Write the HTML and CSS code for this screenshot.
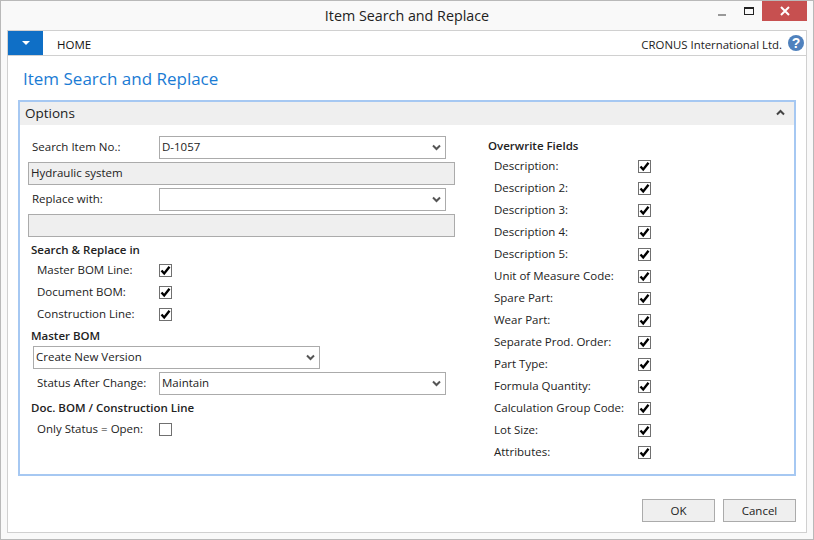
FILE: index.html
```html
<!DOCTYPE html>
<html lang="en">
<head>
  <meta charset="UTF-8">
  <title>Item Search and Replace</title>
  <link rel="stylesheet" href="styles.css">
</head>
<body>
  <svg class="sprites" width="0" height="0">
    <symbol id="check" viewBox="0 0 11 11"><path d="M1.5 5.5 L4.2 8.5 L9.5 1.8" fill="none" stroke="#000" stroke-width="2.4"/></symbol>
    <symbol id="chevron" viewBox="0 0 9 7"><path d="M1 1.5 L4.5 5 L8 1.5" fill="none" stroke="#555" stroke-width="2"/></symbol>
  </svg>

  <div class="window">
    <div class="titlebar">
      <div class="title">Item Search and Replace</div>
      <div class="controls">
        <span class="min"></span>
        <span class="max"></span>
        <span class="close">
          <svg width="10" height="10" viewBox="0 0 10 10"><path d="M1 1 L9 9 M9 1 L1 9" stroke="#fff" stroke-width="2"/></svg>
        </span>
      </div>
    </div>

    <div class="frame">
      <div class="ribbon">
        <div class="app-btn"><span class="arrow"></span></div>
        <div class="tab">HOME</div>
        <div class="company">CRONUS International Ltd.</div>
        <div class="help">?</div>
      </div>

      <h1>Item Search and Replace</h1>

      <div class="panel">
        <div class="panel-head">
          <span>Options</span>
          <svg width="9" height="7" viewBox="0 0 9 7"><path d="M1 5.5 L4.5 2 L8 5.5" fill="none" stroke="#444" stroke-width="2"/></svg>
        </div>
        <div class="panel-body">
          <div class="col-left">
            <div class="field">
              <label>Search Item No.:</label>
              <div class="combo"><span>D-1057</span><svg class="chev"><use href="#chevron"/></svg></div>
            </div>
            <div class="readonly">Hydraulic system</div>
            <div class="field">
              <label>Replace with:</label>
              <div class="combo"><span></span><svg class="chev"><use href="#chevron"/></svg></div>
            </div>
            <div class="readonly"></div>

            <h3 class="first">Search &amp; Replace in</h3>
            <div class="check-row"><label>Master BOM Line:</label><span class="box"><svg><use href="#check"/></svg></span></div>
            <div class="check-row"><label>Document BOM:</label><span class="box"><svg><use href="#check"/></svg></span></div>
            <div class="check-row"><label>Construction Line:</label><span class="box"><svg><use href="#check"/></svg></span></div>

            <h3>Master BOM</h3>
            <div class="combo wide"><span>Create New Version</span><svg class="chev"><use href="#chevron"/></svg></div>
            <div class="field indent">
              <label>Status After Change:</label>
              <div class="combo"><span>Maintain</span><svg class="chev"><use href="#chevron"/></svg></div>
            </div>

            <h3 class="doc">Doc. BOM / Construction Line</h3>
            <div class="check-row"><label>Only Status = Open:</label><span class="box"></span></div>
          </div>

          <div class="col-right">
            <h3>Overwrite Fields</h3>
            <div class="check-row"><label>Description:</label><span class="box"><svg><use href="#check"/></svg></span></div>
            <div class="check-row"><label>Description 2:</label><span class="box"><svg><use href="#check"/></svg></span></div>
            <div class="check-row"><label>Description 3:</label><span class="box"><svg><use href="#check"/></svg></span></div>
            <div class="check-row"><label>Description 4:</label><span class="box"><svg><use href="#check"/></svg></span></div>
            <div class="check-row"><label>Description 5:</label><span class="box"><svg><use href="#check"/></svg></span></div>
            <div class="check-row"><label>Unit of Measure Code:</label><span class="box"><svg><use href="#check"/></svg></span></div>
            <div class="check-row"><label>Spare Part:</label><span class="box"><svg><use href="#check"/></svg></span></div>
            <div class="check-row"><label>Wear Part:</label><span class="box"><svg><use href="#check"/></svg></span></div>
            <div class="check-row"><label>Separate Prod. Order:</label><span class="box"><svg><use href="#check"/></svg></span></div>
            <div class="check-row"><label>Part Type:</label><span class="box"><svg><use href="#check"/></svg></span></div>
            <div class="check-row"><label>Formula Quantity:</label><span class="box"><svg><use href="#check"/></svg></span></div>
            <div class="check-row"><label>Calculation Group Code:</label><span class="box"><svg><use href="#check"/></svg></span></div>
            <div class="check-row"><label>Lot Size:</label><span class="box"><svg><use href="#check"/></svg></span></div>
            <div class="check-row"><label>Attributes:</label><span class="box"><svg><use href="#check"/></svg></span></div>
          </div>
        </div>
      </div>

      <div class="actions">
        <button>OK</button>
        <button>Cancel</button>
      </div>
    </div>
  </div>
</body>
</html>
```

FILE: styles.css
```css
* {
  box-sizing: border-box;
}
html, body {
  margin: 0;
  height: 100%;
}
body {
  font-family: "Open Sans", "Noto Sans", sans-serif;
  font-size: 11.5px;
  color: #222;
  overflow: hidden;
}
.sprites {
  position: absolute;
}
.window {
  width: 814px;
  height: 540px;
  background-color: #f9f9f9;
  border: 1px solid #b9b9b9;
  padding: 0 6px 6px 6px;
  display: flex;
  flex-direction: column;
}
.titlebar {
  height: 29px;
  display: flex;
  justify-content: center;
  align-items: center;
  position: relative;
  flex: none;
}
.title {
  font-size: 14.3px;
}
.controls {
  position: absolute;
  right: 0;
  top: 0;
  display: flex;
  align-items: flex-start;
}
.min {
  width: 8px;
  height: 2px;
  background-color: #999;
  margin: 13px 18px 0 0;
}
.max {
  width: 10px;
  height: 8px;
  border: 1px solid #222;
  border-top-width: 2px;
  margin: 6px 8px 0 0;
}
.close {
  width: 45px;
  height: 20px;
  background-color: #c75050;
  display: flex;
  align-items: center;
  justify-content: center;
}
.frame {
  flex: 1;
  background-color: white;
  border: 1px solid #d0d0d0;
  padding: 0 10px;
  display: flex;
  flex-direction: column;
}
.ribbon {
  height: 25px;
  margin: 0 -10px;
  border-bottom: 1px solid #d0d0d0;
  display: flex;
  align-items: center;
  padding-right: 2px;
  flex: none;
}
.app-btn {
  width: 35px;
  height: 24px;
  background-color: #0f6fc6;
  display: flex;
  align-items: center;
  justify-content: center;
}
.arrow {
  width: 0;
  height: 0;
  border-left: 4px solid transparent;
  border-right: 4px solid transparent;
  border-top: 4px solid white;
}
.tab {
  margin-left: 14px;
  padding-top: 2px;
  font-size: 11.5px;
  color: #111;
}
.company {
  margin-left: auto;
  padding-top: 2px;
  font-size: 11.4px;
}
.help {
  width: 16px;
  height: 16px;
  margin-left: 6px;
  border-radius: 50%;
  background-color: #4f81bd;
  color: white;
  font-family: "Liberation Sans", sans-serif;
  font-size: 14px;
  font-weight: bold;
  line-height: 16px;
  text-align: center;
}
h1 {
  margin: 0;
  height: 44px;
  padding: 11px 0 0 5px;
  font-size: 17px;
  font-weight: normal;
  color: #1a7bd4;
  flex: none;
}
.panel {
  height: 376px;
  border: 2px solid #a6c8f2;
  flex: none;
}
.panel-head {
  height: 23px;
  background-color: #efefef;
  display: flex;
  align-items: center;
  justify-content: space-between;
  padding: 0 9px 2px 5px;
  font-size: 13.5px;
}
.panel-body {
  display: flex;
  padding: 11px 0 0 8px;
}
.col-left {
  width: 427px;
  flex: none;
}
.col-right {
  margin-left: 33px;
}
.field {
  height: 23px;
  display: flex;
  align-items: center;
  margin-bottom: 3px;
}
.field label {
  width: 131px;
  padding: 0 0 2px 4px;
  flex: none;
}
.field.indent label {
  padding-left: 9px;
}
.combo {
  width: 287px;
  height: 23px;
  border: 1px solid #ababab;
  background-color: white;
  display: flex;
  align-items: center;
  justify-content: space-between;
  padding: 0 4px 0 2px;
}
.combo span {
  padding-bottom: 2px;
}
.combo.wide {
  margin: 0 0 3px 5px;
}
.chev {
  width: 9px;
  height: 7px;
}
.readonly {
  height: 23px;
  margin-bottom: 3px;
  border: 1px solid #ababab;
  background-color: #efefef;
  padding-left: 2px;
  line-height: 20px;
}
h3 {
  margin: 0;
  height: 21px;
  padding-left: 3px;
  line-height: 21px;
  font-size: 11.5px;
  font-weight: 600;
}
h3.first {
  height: 19px;
  line-height: 20px;
  margin-top: 3px;
}
h3.doc {
  height: 20px;
  line-height: 20px;
}
.check-row {
  height: 22px;
  display: flex;
  align-items: center;
}
.check-row label {
  width: 122px;
  padding-bottom: 2px;
  margin-left: 9px;
  flex: none;
}
.col-right .check-row label {
  width: 144px;
  margin-left: 6px;
}
.col-right h3 {
  padding-left: 0;
  height: 19px;
  line-height: 20px;
}
.box {
  width: 13px;
  height: 13px;
  border: 1px solid #707070;
  background-color: white;
  display: block;
}
.box svg {
  display: block;
  width: 11px;
  height: 11px;
}
.actions {
  display: flex;
  justify-content: flex-end;
  gap: 8px;
  margin-top: 23px;
}
button {
  width: 73px;
  height: 23px;
  font-family: inherit;
  font-size: 11.5px;
  color: #222;
  background-color: #efefef;
  border: 1px solid #ababab;
  padding: 0;
}
```
